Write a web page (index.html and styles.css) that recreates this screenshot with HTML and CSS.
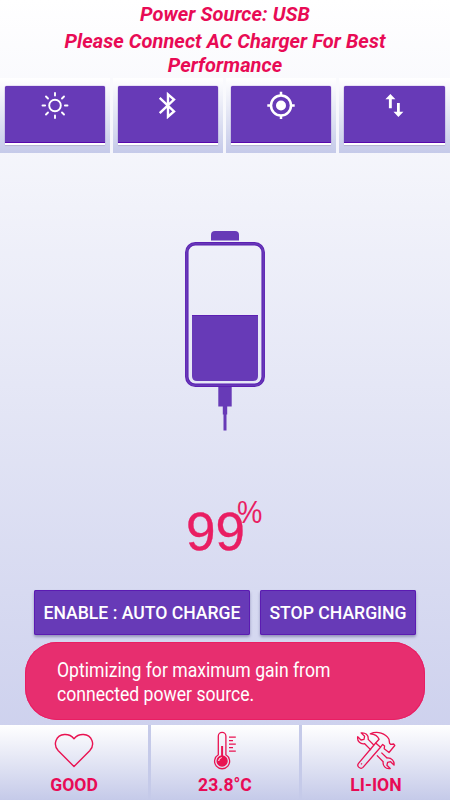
FILE: index.html
```html
<!DOCTYPE html>
<html lang="en">
<head>
<meta charset="utf-8">
<title>Battery charger</title>
<link rel="stylesheet" href="styles.css">
</head>
<body>
<div class="app">
  <header class="notice">
    <p class="source">Power Source: USB</p>
    <p class="hint">Please Connect AC Charger For Best Performance</p>
  </header>
  <nav class="toggles">
    <div class="cell"><button class="toggle" aria-label="Brightness">
      <svg width="28" height="28" viewBox="0 0 28 28" fill="none" stroke="#fff" stroke-width="1.9" stroke-linecap="round"><circle cx="14" cy="14.5" r="5.8"/><path d="M14 2v2.6M14 24.4V27M1.5 14.5h2.6M23.9 14.5h2.6M5 5.5l2 2M21 21.5l2 2M5 23.5l2-2M21 7.5l2-2"/></svg>
    </button></div>
    <div class="cell"><button class="toggle" aria-label="Bluetooth">
      <svg width="28" height="28" viewBox="0 0 28 28" fill="none" stroke="#fff" stroke-width="2.4"><path d="M5.7 6.8L20 20.5l-6 5.2V3.3l6 5.2L5.7 22.2"/></svg>
    </button></div>
    <div class="cell"><button class="toggle" aria-label="Location">
      <svg width="28" height="28" viewBox="0 0 28 28" fill="none" stroke="#fff" stroke-width="2.5"><circle cx="14" cy="14.5" r="10"/><path d="M14 .8v4M14 24.2v3.8M.3 14.5h4M23.7 14.5h4"/><circle cx="14" cy="14.5" r="5" fill="#fff" stroke="none"/></svg>
    </button></div>
    <div class="cell"><button class="toggle" aria-label="Mobile data">
      <svg width="28" height="28" viewBox="0 0 28 28" fill="#fff"><path d="M9.4 3l5 5.2h-3.6v9H7.9v-9H4.4zM17.4 26l-4.9-5.2H16v-8.9h2.8v8.9h3.6z"/></svg>
    </button></div>
  </nav>
  <main class="main">
    <svg class="battery" width="84" height="202" viewBox="0 0 84 202">
      <path d="M28 10.5V5q0-4 4-4h20q4 0 4 4v5.5z" fill="#673ab7"/>
      <rect x="3.8" y="13.7" width="76.4" height="141.6" rx="8.5" fill="none" stroke="#5c1fb3" stroke-width="3.5"/>
      <rect x="3.8" y="13.7" width="76.4" height="141.6" rx="8.5" fill="none" stroke="#673ab7" stroke-width="1.6"/>
      <path d="M9 85h66v61q0 5-5 5H14q-5 0-5-5z" fill="#673ab7"/>
      <path d="M9 85.5h66" stroke="#5c1fb3"/>
      <path d="M35.3 157h13.4v19.5h-4.5v8h-.7V200.5h-3v-16h-.7v-8h-4.5z" fill="#673ab7"/>
    </svg>
    <div class="percent"><span class="value">99</span><span class="sign">%</span></div>
    <div class="actions"><button class="action auto">ENABLE : AUTO CHARGE</button><button class="action stop">STOP CHARGING</button></div>
    <div class="toast"><p><span class="line">Optimizing for maximum gain from</span><br><span class="line">connected power source.</span></p></div>
  </main>
  <footer class="stats">
    <div class="stat">
      <svg width="40" height="40" viewBox="0 0 40 40" fill="none" stroke="#e91251" stroke-width="1.4" stroke-linejoin="round"><path d="M20 36.5L4.3 20.8C-1.5 14.5 2 4.8 10.5 4.5c4.2-.2 7.5 1.7 9.5 4.2 2-2.5 5.3-4.4 9.5-4.2 8.5.3 12 10 6.2 16.3z"/></svg>
      <span>GOOD</span>
    </div>
    <div class="stat">
      <svg width="40" height="40" viewBox="0 0 40 40" fill="none" stroke="#e91251" stroke-width="1.3"><path d="M13.3 24.8V6.2a3.8 3.8 0 017.6 0v18.6a7.5 7.5 0 11-7.6 0z"/><circle cx="17.1" cy="31" r="5" fill="#e91251"/><path d="M17.1 16V28" stroke-width="2"/><path d="M13.7 31a3.4 3.4 0 013-3.4" stroke="#fff" stroke-width="1"/><path d="M24 7.2h6.8M24 10.7h4M24 14.2h6.8M24 17.7h4M24 21.2h6.8"/></svg>
      <span>23.8°C</span>
    </div>
    <div class="stat">
      <svg width="40" height="40" viewBox="0 0 40 40" fill="none" stroke="#e91251" stroke-width="1.3" stroke-linejoin="round"><path d="M18 15.2l-5.8-5.8c.5-4.6-2.8-6.9-7.1-6.5l3.5 3.4-.6 3-3 .7-3.3-3.2c-.8 4.7 3 7.8 7 6.9l6.3 6.4M25.4 22.6l5.6 5.4c4.6-.4 7.6 3 7 7.1l-3.4-3.4-3 .6-.7 3 3.3 3.2c-4.7.8-7.7-2.8-7-6.8l-6.3-6.3"/><path d="M24.5 17.2L7 37.4c-2.5 2.5-6.8-1.2-4.5-4.1L19.7 13z"/><path d="M19.7 13l3.4-3.8C21.8 6 18.6 4 14.3 3.8 21.5.7 29.6 3.4 33 9.3l.6 4 1.2 1.1 2.8-.4 1.2 1.5-5.8 7-4.8-3.8.4-2.8-1.9-1.5-2.2 2.8"/><path d="M5 33.4l1 .8"/></svg>
      <span>LI-ION</span>
    </div>
  </footer>
</div>
</body>
</html>
```

FILE: styles.css
```css
* { box-sizing: border-box; }
body { margin: 0; font-family: Roboto, "Liberation Sans", sans-serif; color: #e80b55; }
p { margin: 0; }
button { border: 0; padding: 0; font: inherit; color: #fff; }
.app { width: 450px; height: 800px; display: flex; flex-direction: column; overflow: hidden; background: linear-gradient(#fff, #c9cdec); }
.notice { height: 78px; padding-top: 2px; text-align: center; font-size: 20px; line-height: 24px; font-weight: 700; font-style: italic; letter-spacing: .06px; }
.hint { width: 340px; margin: 3px auto 0; }
.toggles { height: 75px; display: grid; grid-template-columns: 110px 110px 110px 111px; column-gap: 3px; }
.cell { padding: 8px 5px 0; background: linear-gradient(#fff, #c5cae9); }
.toggle { width: 100%; height: 57px; display: flex; justify-content: center; align-items: flex-start; padding-top: 5px; background: #673ab7; border-radius: 2px 2px 0 0; border-bottom: 1px solid #5608ad; box-shadow: 0 2px 0 #fff, 0 3px 1px #b4b4d1, 0 0 1px #5608ad; }
.main { height: 572px; display: flex; flex-direction: column; align-items: center; }
.battery { flex: none; margin-top: 77px; }
.percent { width: 78px; height: 60px; margin-top: 66px; display: flex; align-items: flex-start; color: #e91e63; font-family: "Liberation Sans", sans-serif; }
.value { font-size: 53px; line-height: 67px; -webkit-text-stroke: .4px #e91e63; }
.sign { margin-left: -8px; font-size: 31px; line-height: 29px; transform: scaleX(.92); transform-origin: left; }
.actions { display: flex; gap: 10px; margin-top: 32px; }
.action { height: 45px; font-size: 17.6px; font-weight: 500; border-radius: 2px; background: #673ab7; box-shadow: inset 0 0 0 1px #5b1bb2, 0 2px 3px #9291b9; }
.auto { width: 216px; }
.stop { width: 156px; }
.toast { width: 400px; height: 78px; margin-top: 7px; padding: 16px 31px 16px 32px; border-radius: 32px; background: #e72e6f; box-shadow: inset 0 0 0 1px #e91e63; color: #fff; font-size: 20px; line-height: 24px; }
.line { display: inline-block; transform: scaleX(.88); transform-origin: left; white-space: nowrap; }
.stats { height: 75px; display: grid; grid-template-columns: repeat(3, 148px); column-gap: 3px; background: #c5cae9; }
.stat { display: flex; flex-direction: column; align-items: center; padding-top: 5px; background: linear-gradient(#fff, #c5cae9); font-size: 17.6px; line-height: 24px; font-weight: 700; }
.stat span { margin-top: 3px; }
```
